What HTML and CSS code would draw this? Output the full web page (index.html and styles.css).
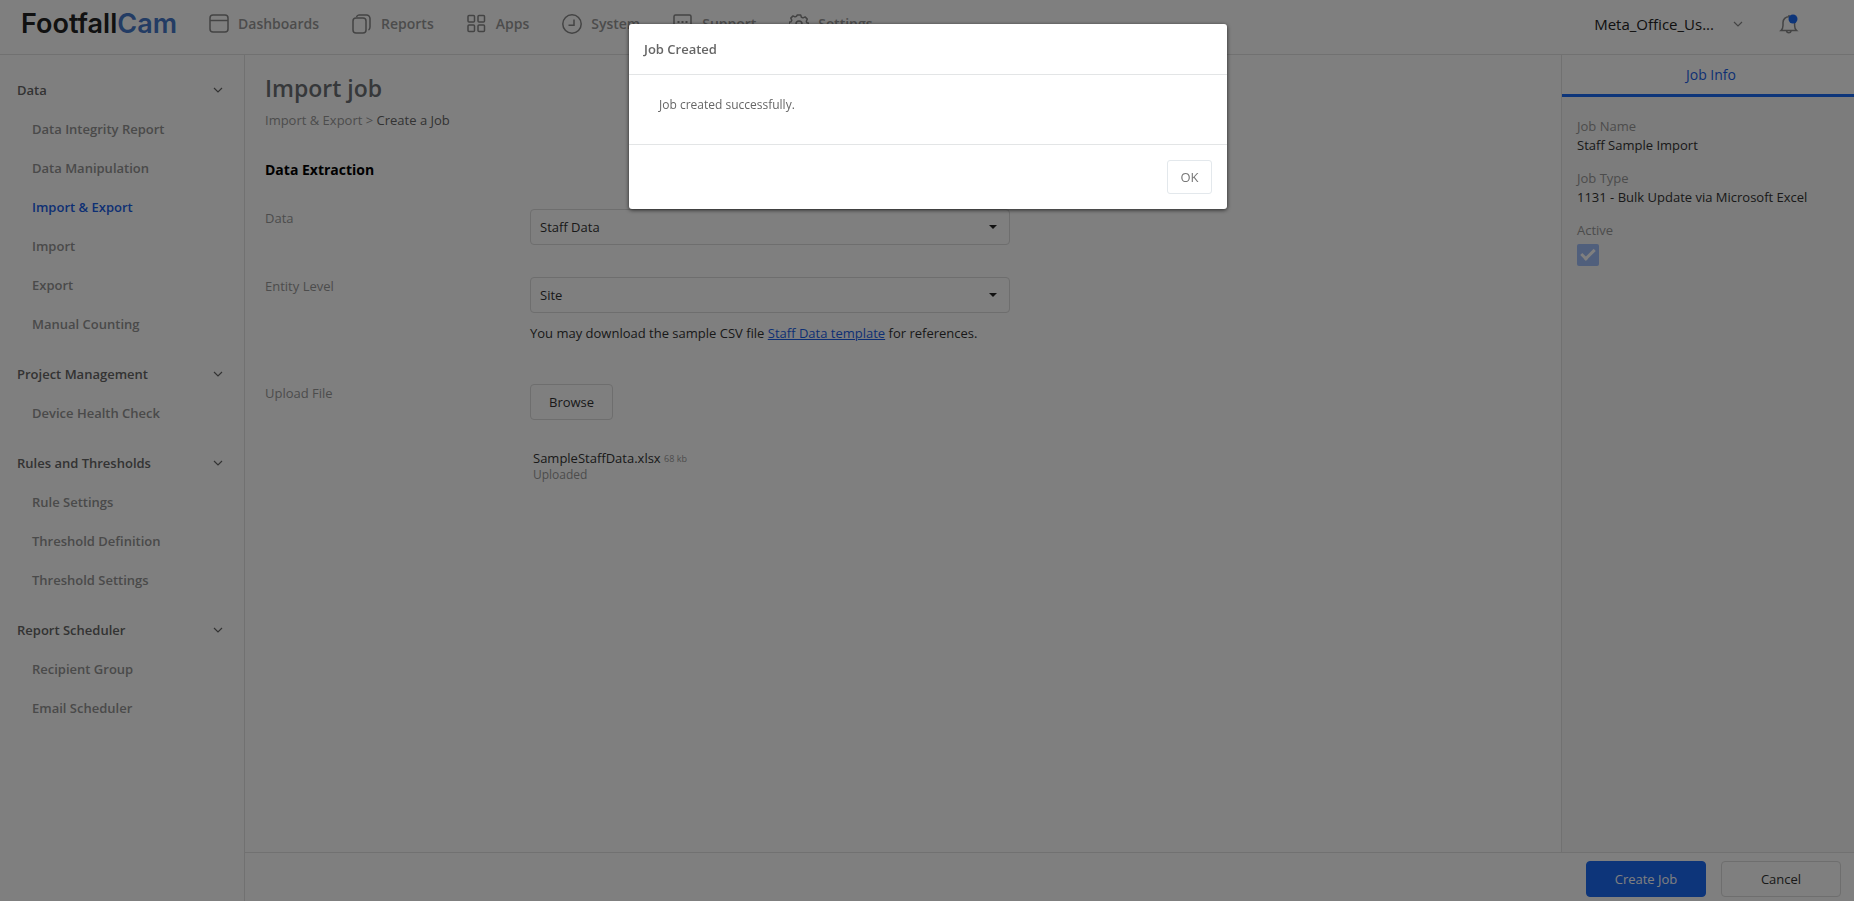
FILE: index.html
```html
<!DOCTYPE html>
<html lang="en">
<head>
<meta charset="utf-8">
<title>FootfallCam - Import job</title>
<link rel="stylesheet" href="styles.css">
</head>
<body>
<div class="app">
  <header class="topbar">
    <a class="logo" href="#">Footfall<span class="logo-accent">Cam</span></a>
    <nav class="topnav" aria-label="Main">
      <a class="topnav-link" href="#"><svg class="icon" viewBox="0 0 20 20"><rect x="1" y="1" width="18" height="17" rx="3"/><path d="M1 6.500h18"/></svg>Dashboards</a>
      <a class="topnav-link" href="#"><svg class="icon" viewBox="0 0 20 20"><rect x="1" y="4" width="13" height="15" rx="3"/><path d="M4.500 3C5 1.500 6 1 7 1h7.500a3.500 3.500 0 0 1 3.500 3.500V13c0 1.500-.5 2.500-1.500 3"/></svg>Reports</a>
      <a class="topnav-link" href="#"><svg class="icon" viewBox="0 0 20 20"><rect x="1" y="1.500" width="6.500" height="6.500" rx="1"/><rect x="11" y="1.500" width="6.500" height="6.500" rx="1"/><rect x="1" y="11" width="6.500" height="6.500" rx="1"/><rect x="11" y="11" width="6.500" height="6.500" rx="1"/></svg>Apps</a>
      <a class="topnav-link" href="#"><svg class="icon" viewBox="0 0 20 20"><circle cx="10" cy="10" r="9.200"/><path d="M12 5.500v5.700H6.500"/></svg>System</a>
      <a class="topnav-link" href="#"><svg class="icon" viewBox="0 0 20 20"><path d="M2.500 1h14A1.500 1.500 0 0 1 18 2.500v12a1.500 1.500 0 0 1-1.500 1.500h-4l-3 3-3-3h-4A1.500 1.500 0 0 1 1 14.500v-12A1.500 1.500 0 0 1 2.500 1z"/><path d="M4.500 8h2M8.500 8h2M12.500 8h2" stroke-width="2"/></svg>Support</a>
      <a class="topnav-link" href="#"><svg class="icon" viewBox="0 0 20 20" stroke-linejoin="round"><circle cx="10" cy="10" r="3"/><path d="M8.300 1h3.400l.7 2.200 1.600.7 2.100-1 2.200 2.200-1 2.100.6 1.500 2 .6v3.100l-2 .7-.7 1.600 1 2.100-2.200 2.200-2-1-1.600.6-.7 2H8.300l-.7-2-1.600-.6-2 1-2.200-2.200 1-2.100-.7-1.600-2-.7V8.300l2-.6.7-1.500-1-2.100L4 1.900l2 1 1.600-.7z"/></svg>Settings</a>
    </nav>
    <button class="user" type="button">Meta_Office_Us...<svg class="chevron" viewBox="0 0 10 6"><path d="M1 1l4 4 4-4"/></svg></button>
    <button class="bell" type="button" aria-label="Notifications"><svg class="icon" viewBox="0 0 20 20"><path d="M2 16.500c1.500-1.300 2-2.500 2-5V8.500a5.800 5.800 0 0 1 11.600 0v3c0 2.500.5 3.700 2 5zM10 1v2M7.500 17c.5 2.400 4.100 2.400 4.600 0"/><circle class="bell-dot" cx="14" cy="5" r="4.500"/></svg></button>
  </header>

  <div class="body">
    <nav class="sidebar" aria-label="Sections">
      <section class="group">
        <button class="group-title" type="button">Data<svg class="chevron" viewBox="0 0 10 6"><path d="M1 1l4 4 4-4"/></svg></button>
        <a class="side-link" href="#">Data Integrity Report</a>
        <a class="side-link" href="#">Data Manipulation</a>
        <a class="side-link active" href="#">Import &amp; Export</a>
        <a class="side-link" href="#">Import</a>
        <a class="side-link" href="#">Export</a>
        <a class="side-link" href="#">Manual Counting</a>
      </section>
      <section class="group">
        <button class="group-title" type="button">Project Management<svg class="chevron" viewBox="0 0 10 6"><path d="M1 1l4 4 4-4"/></svg></button>
        <a class="side-link" href="#">Device Health Check</a>
      </section>
      <section class="group">
        <button class="group-title" type="button">Rules and Thresholds<svg class="chevron" viewBox="0 0 10 6"><path d="M1 1l4 4 4-4"/></svg></button>
        <a class="side-link" href="#">Rule Settings</a>
        <a class="side-link" href="#">Threshold Definition</a>
        <a class="side-link" href="#">Threshold Settings</a>
      </section>
      <section class="group">
        <button class="group-title" type="button">Report Scheduler<svg class="chevron" viewBox="0 0 10 6"><path d="M1 1l4 4 4-4"/></svg></button>
        <a class="side-link" href="#">Recipient Group</a>
        <a class="side-link" href="#">Email Scheduler</a>
      </section>
    </nav>

    <div class="workspace">
      <div class="columns">
        <main class="content">
          <h1 class="title">Import job</h1>
          <p class="crumbs"><a class="crumb" href="#">Import &amp; Export</a> &gt; <span class="crumb-current">Create a Job</span></p>
          <h2 class="subtitle">Data Extraction</h2>
          <form class="form">
            <div class="row">
              <label class="label" for="data">Data</label>
              <div class="field">
                <div class="select-box"><select class="select" id="data"><option>Staff Data</option></select></div>
              </div>
            </div>
            <div class="row">
              <label class="label" for="level">Entity Level</label>
              <div class="field">
                <div class="select-box"><select class="select" id="level"><option>Site</option></select></div>
                <p class="hint">You may download the sample CSV file <a class="hint-link" href="#">Staff Data template</a> for references.</p>
              </div>
            </div>
            <div class="row">
              <label class="label" for="browse">Upload File</label>
              <div class="field">
                <button class="button browse" id="browse" type="button">Browse</button>
                <div class="file">
                  <div class="file-name">SampleStaffData.xlsx <span class="file-size">68 kb</span></div>
                  <div class="file-state">Uploaded</div>
                </div>
              </div>
            </div>
          </form>
        </main>
        <aside class="info">
          <button class="info-tab" type="button">Job Info</button>
          <div class="info-list">
            <div class="info-item"><div class="info-label">Job Name</div><div class="info-value">Staff Sample Import</div></div>
            <div class="info-item"><div class="info-label">Job Type</div><div class="info-value">1131 - Bulk Update via Microsoft Excel</div></div>
            <div class="info-item"><label class="info-label" for="active">Active</label><input class="check" id="active" type="checkbox" checked disabled></div>
          </div>
        </aside>
      </div>
      <footer class="actions">
        <button class="button wide primary" type="button">Create Job</button>
        <button class="button wide" type="button">Cancel</button>
      </footer>
    </div>
  </div>
</div>

<div class="overlay">
  <div class="dialog" role="dialog" aria-modal="true" aria-labelledby="dialog-title">
    <h2 class="dialog-title" id="dialog-title">Job Created</h2>
    <p class="dialog-text">Job created successfully.</p>
    <div class="dialog-actions"><button class="ok" type="button">OK</button></div>
  </div>
</div>
</body>
</html>
```

FILE: styles.css
```css
* { box-sizing: border-box; }
body {
  margin: 0;
  font: 13px/20px "Open Sans", "Noto Sans", sans-serif;
  color: #333;
  background: #fff;
}
h1, h2, p { margin: 0; }
a { color: inherit; text-decoration: none; }
button, select { font: inherit; color: inherit; background: none; border: 0; padding: 0; margin: 0; }
.app { min-height: 100vh; display: flex; flex-direction: column; }

.topbar {
  display: flex;
  align-items: center;
  height: 55px;
  padding: 0 55px 6px 21px;
  border-bottom: 1px solid #e2e2e2;
}
.logo { font: 600 27px/32px Inter, sans-serif; color: #222; width: 188px; }
.logo-accent { color: #4678c8; }
.topnav { display: flex; gap: 33px; flex: 1; }
.topnav-link { display: flex; align-items: center; gap: 9px; font-size: 14px; font-weight: 600; color: #999; }
.icon { width: 20px; height: 20px; flex: none; fill: none; stroke: #888; stroke-width: 1.5; }
.chevron { width: 10px; height: 6px; fill: none; stroke: currentColor; stroke-width: 1.2; }
.user { display: flex; align-items: center; gap: 19px; font-size: 15px; color: #222; }
.user .chevron { stroke: #888; }
.bell { margin-left: 36px; height: 20px; }
.bell .icon { display: block; }
.bell-dot { fill: #1b6af5; stroke: none; }

.body { flex: 1; display: flex; }
.sidebar { width: 245px; flex: none; padding: 15px 21px 15px 17px; border-right: 1px solid #e2e2e2; }
.group { margin-bottom: 11px; display: flex; flex-direction: column; }
.group-title { display: flex; justify-content: space-between; align-items: center; height: 39px; font-weight: 600; color: #666; }
.side-link { height: 39px; line-height: 40px; padding-left: 15px; color: #949494; font-weight: 600; }
.side-link.active { color: #1b5fe8; }

.workspace { flex: 1; display: flex; flex-direction: column; min-width: 0; }
.columns { flex: 1; display: flex; }
.content { flex: 1; padding: 17px 20px; }
.title { font-size: 23px; line-height: 32px; font-weight: 600; color: #6c7074; }
.crumbs { margin-top: 6px; color: #999; }
.crumb-current { color: #666; }
.subtitle { margin-top: 29px; font-size: 14px; line-height: 22px; font-weight: 700; color: #000; }
.form { margin-top: 28px; display: flex; flex-direction: column; gap: 32px; }
.row { display: grid; grid-template-columns: 265px minmax(0, 480px); }
.label { color: #999; line-height: 18px; }
.select-box { position: relative; }
.select-box::after {
  content: "";
  position: absolute;
  right: 13px;
  top: 16px;
  border: 4px solid transparent;
  border-top-color: #222;
  border-bottom: 0;
}
.select { width: 100%; height: 36px; padding: 0 9px; border: 1px solid #dcdcdc; border-radius: 4px; appearance: none; }
.hint { margin: 10px 0 9px; }
.hint-link { color: #1b5fe8; text-decoration: underline; }
.button { height: 36px; border: 1px solid #dcdcdc; border-radius: 4px; }
.browse { padding: 0 18px; }
.file { margin: 30px 0 0 3px; line-height: 16px; }
.file-size { font-size: 9px; color: #999; vertical-align: 1px; }
.file-state { font-size: 12px; line-height: 15px; color: #999; }

.info { width: 293px; flex: none; border-left: 1px solid #e2e2e2; background: #f8f8f8; }
.info-tab { display: block; width: 100%; height: 42px; padding-left: 6px; font-size: 14px; color: #1b5fe8; background: #fff; border-bottom: 3px solid #1b6af5; }
.info-list { padding: 20px 15px; display: flex; flex-direction: column; gap: 14px; }
.info-item { line-height: 19px; }
.info-label { display: block; color: #999; }
.check {
  appearance: none;
  display: block;
  position: relative;
  width: 22px;
  height: 22px;
  margin: 4px 0 0;
  border-radius: 2px;
  background: #a0bef8;
}
.check::after {
  content: "";
  position: absolute;
  box-sizing: border-box;
  left: 4px;
  top: 5px;
  width: 14px;
  height: 8px;
  border: solid #fff;
  border-width: 0 0 3px 3px;
  transform: rotate(-45deg);
}
.actions { display: flex; justify-content: flex-end; gap: 15px; padding: 8px 13px 4px; border-top: 1px solid #e2e2e2; }
.wide { width: 120px; }
.primary { background: #1b6af5; border-color: #1b6af5; color: #fff; }

.overlay { position: fixed; inset: 0; background: rgba(0, 0, 0, .5); display: flex; justify-content: center; align-items: flex-start; padding: 24px 0 0 2px; }
.dialog { width: 598px; max-width: 95%; background: #fff; border-radius: 3px; box-shadow: 0 1px 4px rgba(0, 0, 0, .7); color: #666; }
.dialog-title { font-size: 13px; line-height: 20px; font-weight: 600; padding: 15px; border-bottom: 1px solid #e3e5e6; }
.dialog-text { font-size: 12px; padding: 20px 30px 29px; border-bottom: 1px solid #e3e5e6; }
.dialog-actions { display: flex; justify-content: flex-end; padding: 15px; }
.ok { width: 45px; height: 34px; border: 1px solid #e3e8ec; border-radius: 3px; color: #777; }
```
